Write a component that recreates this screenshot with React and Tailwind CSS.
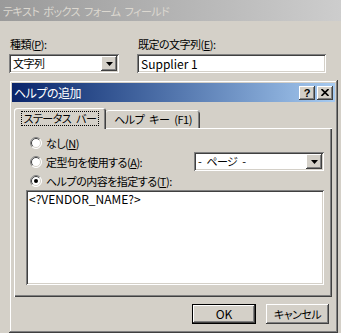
const raised =
  "shadow-[inset_-1px_-1px_#404040,inset_1px_1px_#ffffff,inset_-2px_-2px_#808080,inset_2px_2px_#d4d0c8]"
const sunken =
  "shadow-[inset_1px_1px_#808080,inset_-1px_-1px_#ffffff,inset_2px_2px_#404040,inset_-2px_-2px_#d4d0c8]"
const latin = "text-[12px] tracking-normal [word-spacing:normal]"

function Key({ k }) {
  return <span className="underline underline-offset-[1px]">{k}</span>
}

function Arrow() {
  return (
    <svg width="7" height="4" viewBox="0 0 7 4">
      <polygon points="0,0 7,0 3.5,4" fill="#000" />
    </svg>
  )
}

function Combo({ value, className }) {
  return (
    <div className={`flex h-[19px] items-center bg-white p-[2px] ${sunken} ${className}`}>
      <span className="flex-1 whitespace-nowrap pl-[2px] leading-[15px]">{value}</span>
      <span className={`flex h-[15px] w-[16px] items-center justify-center bg-[#d4d0c8] ${raised}`}>
        <Arrow />
      </span>
    </div>
  )
}

function Radio({ checked }) {
  return (
    <svg width="12" height="12" viewBox="0 0 12 12" className="shrink-0">
      <circle cx="6" cy="6" r="5.5" fill="#fff" />
      <path d="M2.1 9.9 A5.5 5.5 0 0 1 9.9 2.1" stroke="#808080" fill="none" />
      <path d="M9.9 2.1 A5.5 5.5 0 0 1 2.1 9.9" stroke="#ffffff" fill="none" />
      <path d="M2.8 9.2 A4.5 4.5 0 0 1 9.2 2.8" stroke="#404040" fill="none" />
      <path d="M9.2 2.8 A4.5 4.5 0 0 1 2.8 9.2" stroke="#d4d0c8" fill="none" />
      {checked && <circle cx="6" cy="6" r="2" fill="#000" />}
    </svg>
  )
}

function RadioRow({ checked, children, className = "" }) {
  return (
    <div className={`flex items-center gap-[4px] ${className}`}>
      <Radio checked={checked} />
      <span className="whitespace-nowrap">{children}</span>
    </div>
  )
}

export default function App() {
  return (
    <div className="relative h-[333px] w-[341px] overflow-hidden bg-[#d4d0c8] font-['Noto_Sans_CJK_JP',sans-serif] text-[11px] leading-[14px] tracking-[-0.5px] text-black [font-feature-settings:'palt'] [word-spacing:3px]">
      {/* background window */}
      <div className="h-[237px]">
        <div className="flex h-[21px] items-center bg-linear-to-r from-[#9a9a9a] to-[#cdcdcd] pl-[3px] text-[#dcd8d0] [word-spacing:2px]">
          テキスト ボックス フォーム フィールド
        </div>
        <div className="flex gap-[18px] pl-[9px] pt-[16px]">
          <div className="w-[110px]">
            <div className="mb-[2px] h-[15px] pl-px">
              種類(<Key k="P" />):
            </div>
            <Combo value="文字列" />
          </div>
          <div className="w-[189px]">
            <div className="mb-[2px] h-[15px] pl-px">
              既定の文字列(<Key k="E" />):
            </div>
            <div className={`flex h-[19px] items-center bg-white pl-[4px] ${sunken} ${latin}`}>Supplier 1</div>
          </div>
        </div>
      </div>

      {/* front dialog */}
      <div className="absolute left-[9px] top-[80px] h-[253px] w-[329px] bg-[#d4d0c8] p-[3px] shadow-[inset_-1px_-1px_#404040,inset_1px_1px_#d4d0c8,inset_-2px_-2px_#808080,inset_2px_2px_#ffffff]">
        <div className="flex h-[19px] items-center bg-linear-to-r from-[#0a246a] to-[#a6caf0] pl-[2px] pr-[2px] text-white">
          <span className="flex-1 text-[12px]">ヘルプの追加</span>
          <div className="flex gap-[2px]">
            <span className={`flex h-[14px] w-[16px] items-center justify-center bg-[#d4d0c8] font-['Liberation_Sans',sans-serif] text-[11px] font-bold tracking-normal text-black ${raised}`}>
              ?
            </span>
            <span className={`flex h-[14px] w-[16px] items-center justify-center bg-[#d4d0c8] ${raised}`}>
              <svg width="8" height="7" viewBox="0 0 8 7">
                <path d="M0.5 0 L7.5 7 M7.5 0 L0.5 7" stroke="#000" strokeWidth="1.6" />
              </svg>
            </span>
          </div>
        </div>

        {/* tabs */}
        <div className="ml-[2px] mt-[6px] flex h-[20px] items-end">
          <div className="relative z-10 -mb-px flex h-[21px] w-[92px] items-center justify-center rounded-t-[3px] bg-[#d4d0c8] shadow-[inset_1px_1px_#ffffff,inset_-1px_0_#404040,inset_-2px_0_#808080]">
            <span className="whitespace-nowrap border border-dotted border-black px-[2px] leading-[13px]">ステータス バー</span>
          </div>
          <div className="flex h-[18px] w-[94px] items-center justify-center whitespace-nowrap rounded-t-[3px] shadow-[inset_0_1px_#ffffff,inset_-1px_0_#404040,inset_-2px_0_#808080]">
            ヘルプ キー (F1)
          </div>
        </div>

        <div className="ml-[2px] h-[169px] w-[318px] pt-[8px] shadow-[inset_1px_1px_#ffffff,inset_-1px_-1px_#404040,inset_-2px_-2px_#808080]">
          <RadioRow className="h-[14px] pl-[16px]">
            なし(<Key k="N" />)
          </RadioRow>
          <div className="mt-[2px] flex h-[19px] items-center pl-[16px] pr-[8px]">
            <RadioRow className="flex-1">
              定型句を使用する(<Key k="A" />):
            </RadioRow>
            <Combo value="- ページ -" className="w-[130px]" />
          </div>
          <RadioRow checked className="mt-[3px] h-[14px] pl-[16px]">
            ヘルプの内容を指定する(<Key k="T" />):
          </RadioRow>
          <div className={`ml-[12px] mt-[2px] h-[95px] w-[298px] bg-white px-[3px] py-[2px] ${sunken} ${latin}`}>
            &lt;?VENDOR_NAME?&gt;
          </div>
        </div>

        <div className="mt-[7px] flex justify-end gap-[10px] pr-[6px]">
          <div className="h-[20px] w-[64px] border border-black">
            <div className={`flex h-full w-full items-center justify-center bg-[#d4d0c8] ${raised} ${latin}`}>OK</div>
          </div>
          <div className={`flex h-[20px] w-[63px] items-center justify-center whitespace-nowrap bg-[#d4d0c8] ${raised}`}>キャンセル</div>
        </div>
      </div>
    </div>
  )
}
